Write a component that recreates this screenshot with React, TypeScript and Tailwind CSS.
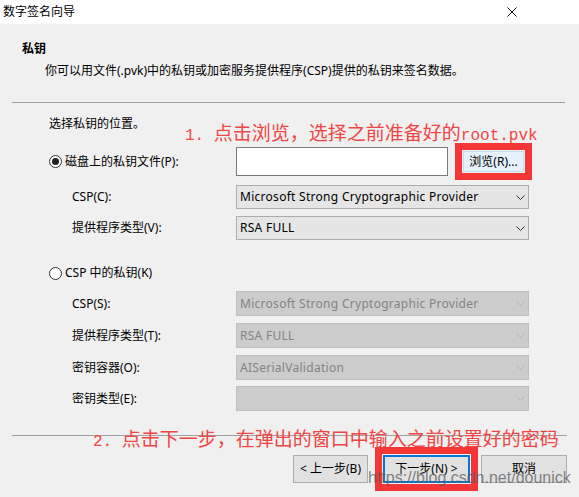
import { ReactNode } from 'react'

const ui = 'font-["Noto_Sans","Noto_Sans_CJK_SC",sans-serif] text-[12px] leading-4'

function Chevron({ muted }: { muted?: boolean }) {
  return (
    <svg width="9" height="5" viewBox="0 0 9 5" className="mr-[3px] shrink-0">
      <polyline
        points="0.5,0.5 4.5,4.5 8.5,0.5"
        fill="none"
        stroke={muted ? '#b4b4b4' : '#333'}
        strokeWidth="1"
      />
    </svg>
  )
}

function Select({ value, disabled, h = 'h-[24px]' }: { value: string; disabled?: boolean; h?: string }) {
  return (
    <div
      className={`${h} w-[293px] flex items-center justify-between pl-[3px] border ${
        disabled ? 'bg-[#cccccc] border-[#bfbfbf] text-[#838383]' : 'bg-[#e5e5e5] border-[#adadad] text-black'
      }`}
    >
      <span className="tracking-[0.28px]">{value}</span>
      <Chevron muted={disabled} />
    </div>
  )
}

function Radio({ checked }: { checked?: boolean }) {
  return (
    <span className="w-[13px] h-[13px] rounded-full border border-[#333] bg-white flex items-center justify-center shrink-0">
      {checked && <span className="w-[7px] h-[7px] rounded-full bg-[#222]" />}
    </span>
  )
}

function Row({ label, children, mt, h }: { label: ReactNode; children: ReactNode; mt: string; h: string }) {
  return (
    <div className={`flex items-center ${mt} ${h}`}>
      <div className="w-[187px] shrink-0 flex items-center">{label}</div>
      {children}
    </div>
  )
}

function Note({ lead, children, className }: { lead: string; children: ReactNode; className: string }) {
  return (
    <div
      className={`absolute whitespace-nowrap text-[#f04545] text-[19px] leading-[19px] font-["Noto_Sans_CJK_SC",sans-serif] ${className}`}
    >
      <span className='font-["Liberation_Mono",monospace] text-[16px] whitespace-pre'>{lead}</span>
      {children}
    </div>
  )
}

export default function App() {
  return (
    <div className={`relative w-[579px] h-[497px] bg-[#f0f0f0] text-black overflow-hidden ${ui}`}>
      {/* title bar */}
      <div className="h-[24px] bg-white flex items-center justify-between pl-[3px] pr-[62px]">
        <span>数字签名向导</span>
        <svg width="10" height="10" viewBox="0 0 10 10">
          <path d="M0.5 0.5 L9.5 9.5 M9.5 0.5 L0.5 9.5" stroke="#111" strokeWidth="1" />
        </svg>
      </div>

      {/* header */}
      <div className="pt-[17px] pl-[22px]">
        <div className="font-bold">私钥</div>
        <div className="mt-[6px] pl-[23px]">你可以用文件(.pvk)中的私钥或加密服务提供程序(CSP)提供的私钥来签名数据。</div>
      </div>
      <div className="mt-[23px] ml-[12px] w-[553px] h-px bg-[#a0a0a0]" />

      {/* body */}
      <div className="pl-[49px]">
        <div className="mt-[13px]">选择私钥的位置。</div>

        <Row
          mt="mt-[15px]"
          h="h-[29px]"
          label={
            <span className="flex items-center gap-[3px]">
              <Radio checked />
              磁盘上的私钥文件(P):
            </span>
          }
        >
          <div className="w-[212px] h-[29px] bg-white border border-[#7a7a7a]" />
          <div className="ml-[7px] h-[37px] w-[77px] border-[7px] border-[#f53636] p-px shrink-0">
            <div className="h-full bg-[#e5f1fb] border border-[#c4dcf2] flex items-center justify-center">
              浏览(R)...
            </div>
          </div>
        </Row>
        <Row mt="mt-[9px]" h="h-[24px]" label={<span className="pl-[23px]">CSP(C):</span>}>
          <Select value="Microsoft Strong Cryptographic Provider" />
        </Row>
        <Row mt="mt-[7px]" h="h-[24px]" label={<span className="pl-[23px]">提供程序类型(V):</span>}>
          <Select value="RSA FULL" />
        </Row>

        <div className="mt-[25px] h-[16px] flex items-center gap-[3px]">
          <Radio />
          CSP 中的私钥(K)
        </div>

        <Row mt="mt-[10px]" h="h-[25px]" label={<span className="pl-[23px]">CSP(S):</span>}>
          <Select value="Microsoft Strong Cryptographic Provider" disabled h="h-[25px]" />
        </Row>
        <Row mt="mt-[7px]" h="h-[25px]" label={<span className="pl-[23px]">提供程序类型(T):</span>}>
          <Select value="RSA FULL" disabled h="h-[25px]" />
        </Row>
        <Row mt="mt-[7px]" h="h-[25px]" label={<span className="pl-[23px]">密钥容器(O):</span>}>
          <Select value="AISerialValidation" disabled h="h-[25px]" />
        </Row>
        <Row mt="mt-[6px]" h="h-[25px]" label={<span className="pl-[23px]">密钥类型(E):</span>}>
          <Select value="" disabled h="h-[25px]" />
        </Row>
      </div>

      <div className="mt-[24px] ml-[12px] w-[555px] h-px bg-[#a0a0a0]" />

      {/* buttons */}
      <div className="mt-[19px] h-[28px] flex items-center justify-end pr-[12px]">
        <button className="w-[75px] h-[28px] bg-[#e1e1e1] border border-[#adadad]">&lt; 上一步(B)</button>
        <div className="ml-[7px] w-[103px] h-[44px] border-[7px] border-[#f53636] p-px shrink-0">
          <button className="w-full h-full bg-[#e1e1e1] border-2 border-[#0078d7]">下一步(N) &gt;</button>
        </div>
        <button className="ml-[3px] w-[86px] h-[28px] bg-[#e1e1e1] border border-[#adadad]">取消</button>
      </div>

      {/* annotations */}
      <Note lead="1. " className="left-[185px] top-[122px]">
        点击浏览，选择之前准备好的<span className='font-["Liberation_Mono",monospace] text-[16px]'>root.pvk</span>
      </Note>
      <Note lead="2. " className="left-[93px] top-[428px]">
        点击下一步，在弹出的窗口中输入之前设置好的密码
      </Note>

      {/* watermark */}
      <div className='absolute left-[368px] top-[470px] font-["Liberation_Sans",sans-serif] text-[16px] leading-none text-[#5c5c5c]/75'>
        https://blog.csdn.net/dounick
      </div>
    </div>
  )
}
